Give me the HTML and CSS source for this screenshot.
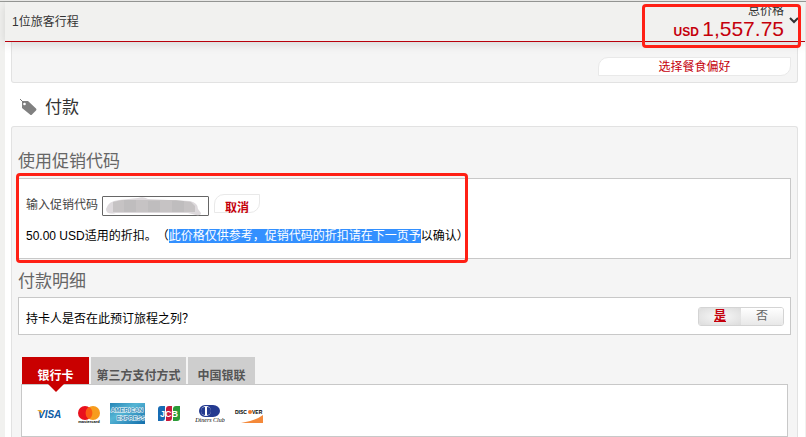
FILE: index.html
```html
<!DOCTYPE html>
<html lang="zh-CN">
<head>
<meta charset="utf-8">
<title>付款</title>
<link rel="stylesheet" href="styles.css">
</head>
<body>
<div class="page">
  <header class="trip-bar">
    <div class="trip-name">1位旅客行程</div>
    <div class="total">
      <div class="total-label">总价格</div>
      <div class="total-price"><b>USD</b> <span>1,557.75</span></div>
    </div>
    <svg class="chevron" width="10" height="7" viewBox="0 0 10 7"><path d="M1 1l4 4 4-4" fill="none" stroke="#333" stroke-width="2"/></svg>
    <div class="mark mark-price"></div>
  </header>
  <main>
    <section class="panel panel-meal">
      <button type="button" class="meal-button">选择餐食偏好</button>
    </section>
    <h1>
      <svg width="17" height="17" viewBox="0 0 17 17"><path d="M2 2l6 0 8 7.500q1 1 0 2l-4 4q-1 1-2 0L2 9z" fill="#808080"/><circle cx="4.500" cy="5" r="1.300" fill="#fff"/><path d="M0 0l4 4" stroke="#777" fill="none"/></svg>
      付款
    </h1>
    <section class="panel panel-pay">
      <h2>使用促销代码</h2>
      <div class="box promo">
        <div class="promo-row">
          <label for="code">输入促销代码</label>
          <div class="code-field">
            <input id="code" type="text">
            <svg class="smudge" width="100" height="20" viewBox="0 0 100 20">
              <path d="M2 13Q4 5 15 4L34 2q5-2 10 1l42 2q8 2 8 8l3 4q0 3-5 2l-8-2H12Q2 19 2 13z" fill="#ddd9dc"/>
              <path d="M9 6l9-2h54l15 2 4 4v6H9z" fill="#c6c3c4"/>
              <path d="M20 4h12v12H20zM44 5h12v11H44zM68 5h12v11H68z" fill="#bfbdbe"/>
            </svg>
          </div>
          <button type="button" class="cancel">取消</button>
        </div>
        <p>50.00 USD适用的折扣。（<mark>此价格仅供参考，促销代码的折扣请在下一页予</mark>以确认）</p>
        <div class="mark mark-promo"></div>
      </div>
      <h2 class="details-title">付款明细</h2>
      <div class="box holder">
        <span>持卡人是否在此预订旅程之列？</span>
        <div class="toggle">
          <button type="button" class="on">是</button><button type="button">否</button>
        </div>
      </div>
      <nav class="tabs">
        <button type="button" class="active">银行卡</button>
        <button type="button" class="wide">第三方支付方式</button>
        <button type="button">中国银联</button>
      </nav>
      <div class="box cards">
        <svg width="32" height="22" viewBox="0 0 32 22" role="img" aria-label="VISA"><text x="2" y="15" class="visa" fill="#0d5ba5">VISA</text><path d="M1 7h4l2 4z" fill="#efad27"/></svg>
        <svg width="24" height="22" viewBox="0 0 24 22" role="img" aria-label="mastercard"><circle cx="8" cy="10" r="7" fill="#e9101d"/><circle cx="16" cy="10" r="7" fill="#f79c1d"/><path d="M12 4a7 7 0 0 1 0 12 7 7 0 0 1 0-12z" fill="#fb5c13"/><text x="12" y="20" class="micro" text-anchor="middle">mastercard</text></svg>
        <svg width="35" height="22" viewBox="0 0 35 22" role="img" aria-label="AMERICAN EXPRESS"><defs><linearGradient id="amex" x2="1" y2="1"><stop stop-color="#2785b6"/><stop offset=".4" stop-color="#55b5d4"/><stop offset="1" stop-color="#126dab"/></linearGradient></defs><path d="M0 0h35v21H0z" fill="url(#amex)"/><text x="17" y="9" class="amex" text-anchor="middle">AMERICAN</text><text x="21" y="17" class="amex" text-anchor="middle">EXPRESS</text></svg>
        <svg width="32" height="22" viewBox="-3 0 32 22" role="img" aria-label="JCB"><path d="M1 6q0-3 3-3h4v12q0 3-3 3H1z" fill="#176cb4"/><path d="M9 6q0-3 3-3h3v12q0 3-3 3H9z" fill="#c7193d"/><path d="M16 6q0-3 3-3h4v12q0 3-3 3h-4z" fill="#2b9b38"/><text x="12" y="14" class="jcb" text-anchor="middle">JCB</text></svg>
        <svg width="30" height="22" viewBox="0 0 30 22" role="img" aria-label="Diners Club"><path d="M10 2h8a7 6 0 0 1 0 12h-8a6 6 0 0 1 0-12z" fill="#253b91"/><circle cx="11" cy="8" r="5" fill="#fff"/><path d="M10 4a4 4 0 0 0 0 8zM12 4a4 4 0 0 1 0 8z" fill="#253b91"/><text x="15" y="19" class="diners" text-anchor="middle">Diners Club</text></svg>
        <svg width="30" height="22" viewBox="0 0 30 22" role="img" aria-label="DISCOVER"><text x="1" y="11" class="discover">DISC</text><circle cx="16" cy="9" r="2" fill="#f0782a"/><text x="18" y="11" class="discover">VER</text><path d="M7 20q14-2 22-8v8z" fill="#f4893a"/></svg>
      </div>
    </section>
  </main>
</div>
</body>
</html>
```
FILE: styles.css
```css
* { box-sizing: border-box; }
body {
  margin: 0;
  background: #f1f1ef;
  border-top: 1px solid #e8e8e6;
  font: 12px/16px "Liberation Sans", "Noto Sans CJK SC", sans-serif;
  text-spacing-trim: space-all;
  color: #000;
}
button { margin: 0; padding: 0; font: inherit; cursor: pointer; }
h1, h2, p { margin: 0; font-weight: 400; }
.page { border-top: 1px solid #999b98; padding: 0 1px 0 5px; }
.trip-bar {
  position: relative;
  display: flex;
  align-items: flex-start;
  height: 40px;
  padding: 0 6px 0 7px;
  background: #f1f1ef;
  border-bottom: 1px solid #b8000b;
  box-shadow: 0 2px 10px rgba(0, 0, 0, .13);
}
.trip-name { flex: 1; padding-top: 12px; color: #333; }
.total { padding-top: 1px; text-align: right; color: #333; margin-right: 5px; }
.total-label { line-height: 16px; }
.total-price { line-height: 20px; color: #c5000b; }
.total-price span { font-size: 21px; }
.chevron { margin-top: 15px; }
.mark { position: absolute; border: 3px solid #ff2015; border-radius: 4px; pointer-events: none; }
.mark-price { top: 2px; right: 4px; width: 159px; height: 44px; }
main { background: #fff; padding: 0 7px 0 6px; }
.panel { background: #f5f5f5; border: 1px solid #e2e2e2; padding: 0 6px; }
.panel-meal {
  display: flex;
  justify-content: flex-end;
  height: 41px;
  border-top: 0;
  border-radius: 0 0 3px 3px;
  padding-top: 15px;
}
.meal-button {
  width: 193px;
  height: 19px;
  border: 1px solid #e9e9e9;
  border-radius: 10px 0 10px 0;
  background: #fff;
  color: #c5000b;
  line-height: 16px;
}
h1 {
  display: flex;
  align-items: center;
  gap: 8px;
  height: 43px;
  padding: 6px 0 0 9px;
  font-size: 17px;
  color: #333;
}
.panel-pay { border-bottom: 0; border-radius: 3px 3px 0 0; }
h2 { padding: 23px 0 4px; font-size: 17px; line-height: 24px; color: #666; }
h2.details-title { padding: 11px 0 3px; }
.box { background: #fff; border: 1px solid #c8c8c8; }
.promo { position: relative; height: 81px; padding: 15px 7px 0; }
.promo-row { display: flex; align-items: flex-start; height: 34px; }
.promo-row label { width: 76px; padding-top: 3px; color: #444; }
.code-field { position: relative; width: 107px; height: 20px; margin: 2px 5px 0 0; }
.code-field input { display: block; width: 100%; height: 100%; padding: 0 4px; border: 1px solid #666; border-radius: 1px; background: #fff; font: inherit; }
.smudge { position: absolute; left: 2px; top: 0; }
.cancel {
  width: 46px;
  height: 19px;
  padding-top: 5px;
  border: 1px solid #e9e9e9;
  border-radius: 10px 0 10px 0;
  background: #fff;
  color: #c5000b;
  font-weight: 700;
}
.promo mark { background: #3390ff; color: #fff; }
.mark-promo { top: -6px; left: -3px; width: 452px; height: 90px; }
.holder { display: flex; justify-content: space-between; align-items: center; height: 38px; padding: 0 6px 0 7px; }
.holder span { padding-top: 5px; }
.toggle { display: flex; width: 86px; height: 19px; border: 1px solid #d4d4d4; border-radius: 3px; overflow: hidden; }
.toggle button { flex: 1; border: 0; color: #666; background: linear-gradient(#fff, #e8e8e8); line-height: 16px; }
.toggle .on { color: #c5000b; background: radial-gradient(#f8f8f8, #dcdcdc); font-weight: 700; text-decoration: underline; }
.tabs { display: flex; gap: 2px; padding: 22px 4px 0; }
.tabs button { position: relative; width: 67px; height: 27px; padding-top: 10px; border: 0; background: #cecece; color: #555; font-weight: 700; }
.tabs .wide { width: 95px; }
.tabs .active { background: #c90000; color: #fff; }
.tabs .active::after {
  content: "";
  position: absolute;
  z-index: 1;
  left: 26px;
  top: 100%;
  border: 8px solid transparent;
  border-top-color: #c90000;
  border-bottom: 0;
}
.cards { display: flex; align-items: center; gap: 9px; height: 53px; margin: 0 3px; padding: 6px 14px 0; }
.cards text { font-family: "Liberation Sans", sans-serif; }
.cards .visa { font-size: 10px; font-weight: 700; font-style: italic; }
.cards .micro { font-size: 4px; font-weight: 700; }
.cards .amex { font-size: 6px; font-weight: 700; fill: #2d88b5; stroke: #fff; stroke-width: 1px; paint-order: stroke; }
.cards .jcb { font-size: 9px; font-weight: 700; fill: #fff; }
.cards .diners { font-family: "Liberation Serif", serif; font-size: 6px; font-style: italic; }
.cards .discover { font-size: 5px; font-weight: 700; }
```
